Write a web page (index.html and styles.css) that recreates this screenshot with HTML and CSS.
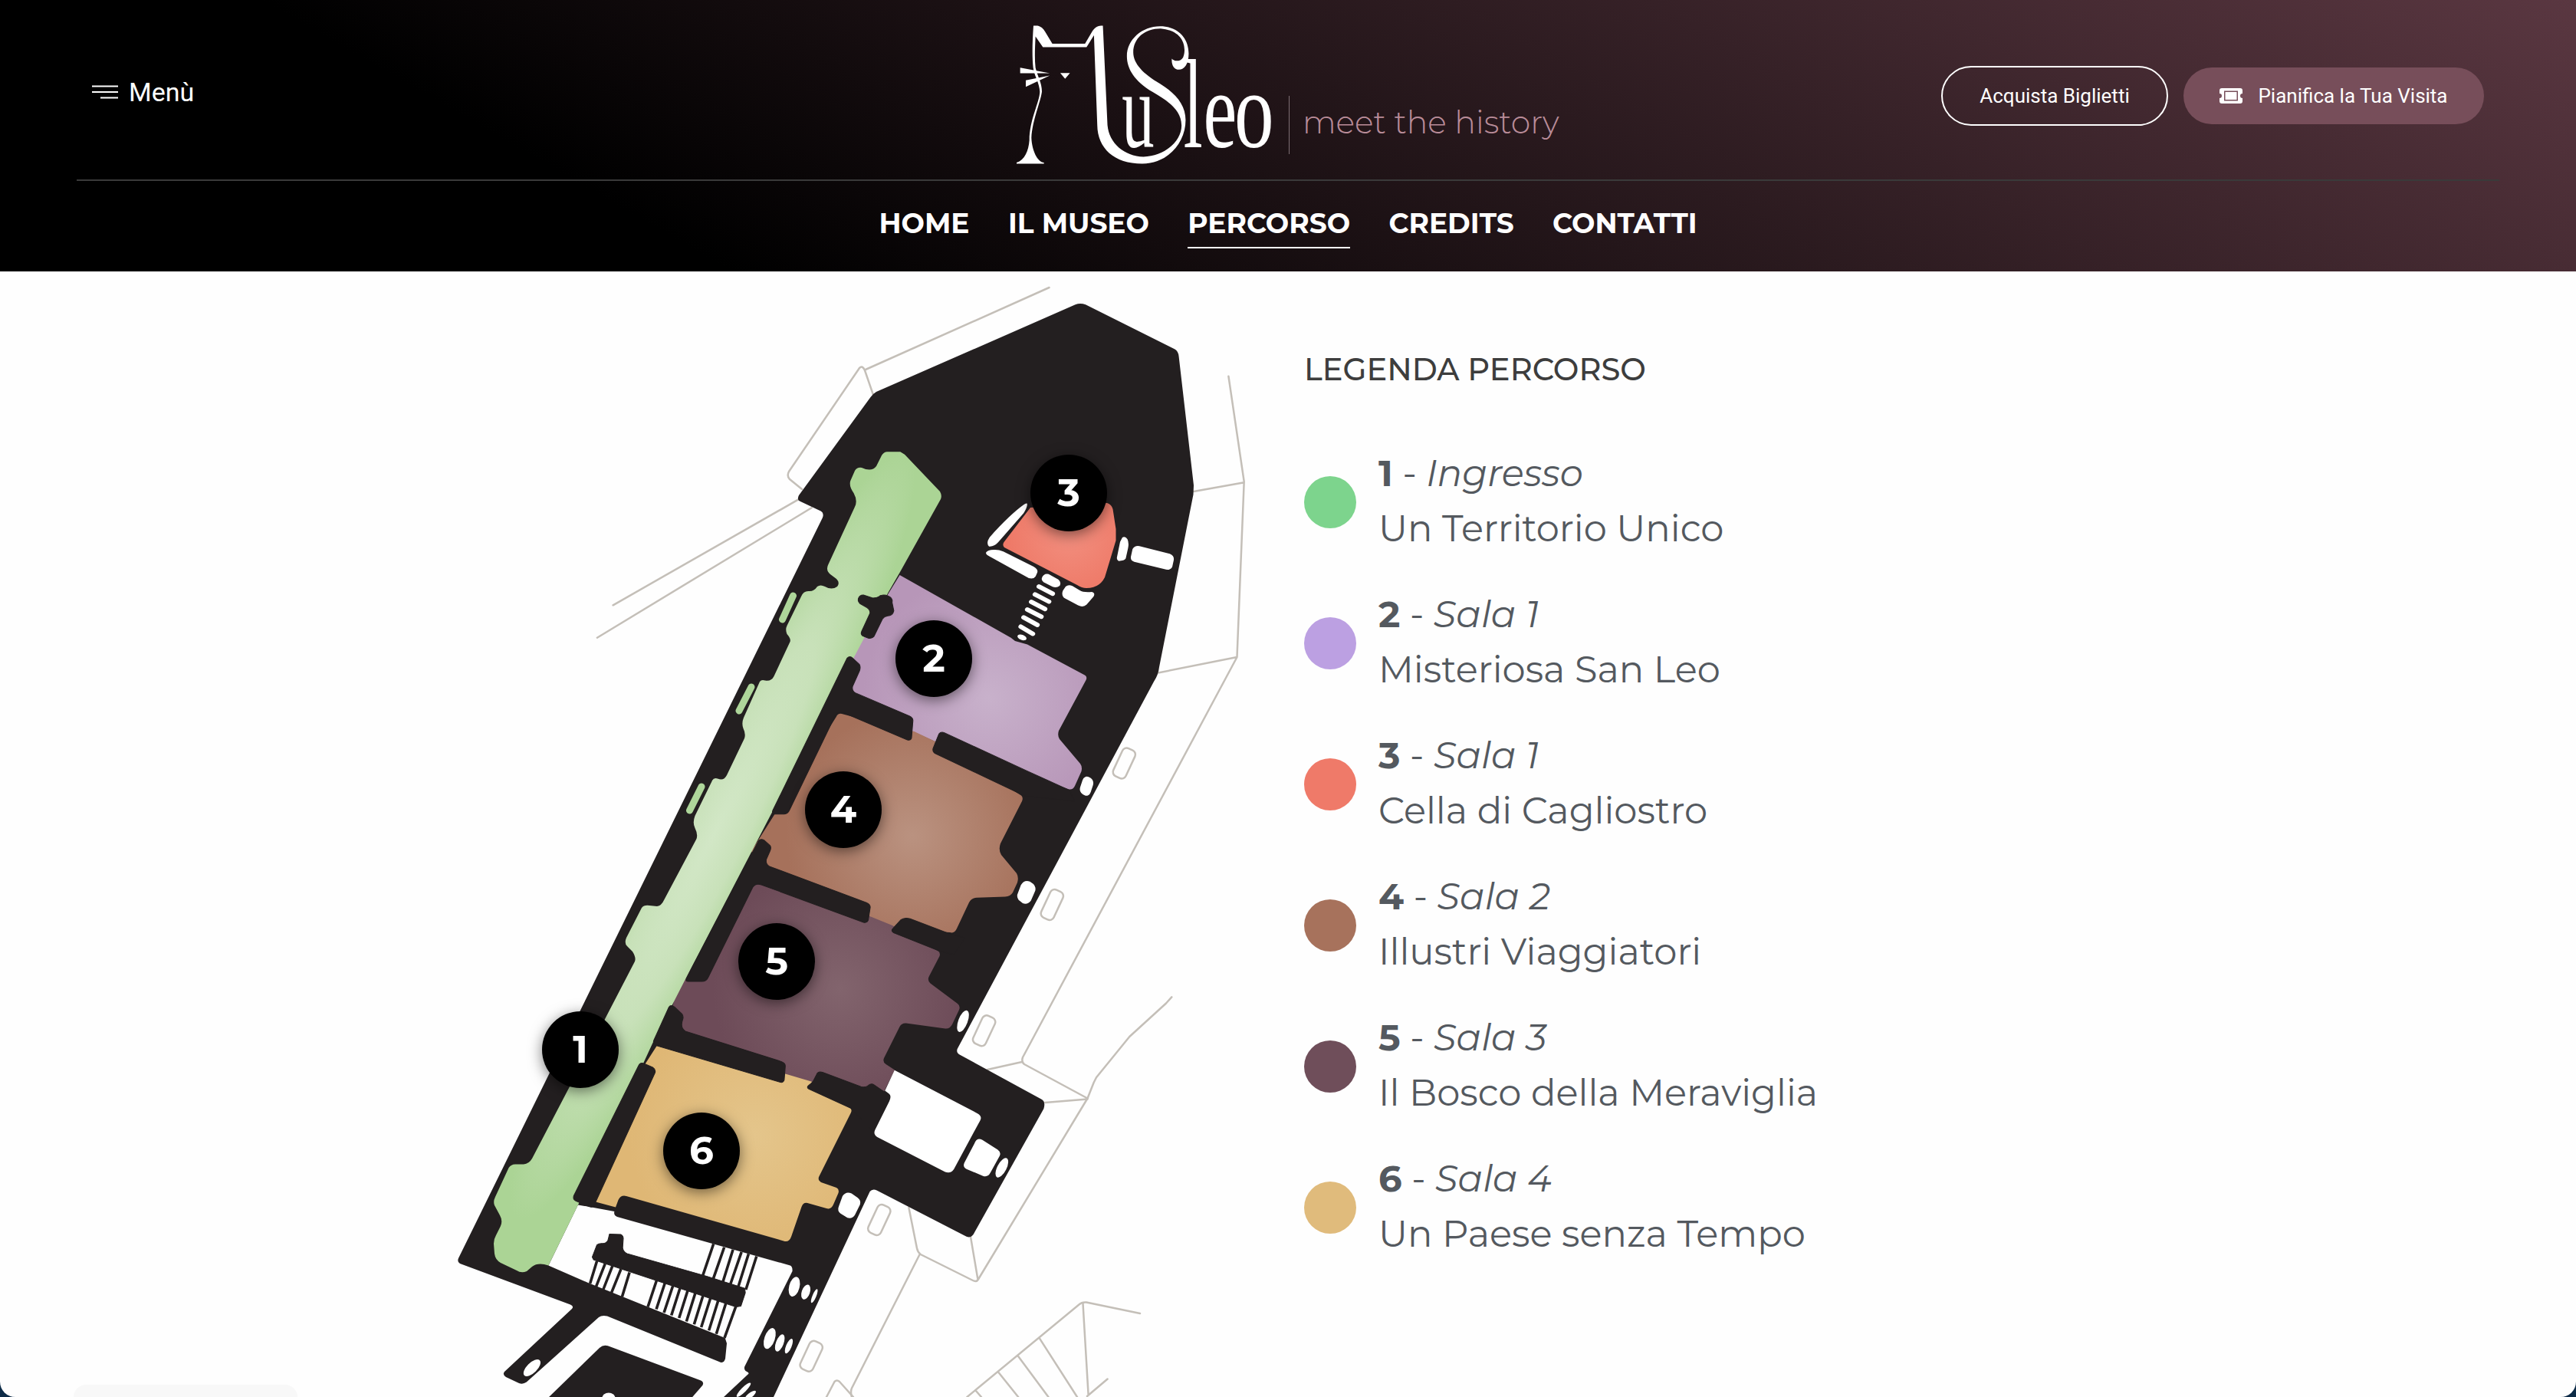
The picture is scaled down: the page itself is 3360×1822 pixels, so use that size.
FILE: index.html
```html
<!DOCTYPE html>
<html lang="it">
<head>
<meta charset="utf-8">
<title>MuSleo – Percorso</title>
<link rel="stylesheet" href="styles.css">
</head>
<body>
<div class="page">
  <header class="header">
    <div class="topbar">
      <a class="menu">
        <svg class="menu-icon" viewBox="0 0 34 20"><path d="M0 2.5H34M0 10H34M11 17.500H34"/></svg>
        <span class="menu-label">Menù</span>
      </a>
      <div class="brand">
        <svg class="logo" viewBox="48 40 1000 542" role="img" aria-label="MuSleo">
          <path d="M114 41H130C145 45 152 52 160 65L188 111H316L345 62C356 46 366 41 386 41L404 430C410 500 470 552 545 554C630 552 696 490 694 430C692 370 640 335 580 300C510 258 480 210 480 160C480 95 540 43 610 43C680 43 722 90 722 150C722 190 705 213 684 213C665 213 654 195 656 170C665 182 690 182 700 165C715 130 705 60 612 52C550 52 505 90 505 145C505 190 545 230 610 268C670 305 710 350 710 410C710 500 640 581 540 581C430 581 365 520 364 430L351 78L322 125H151L122 83C120 130 118 170 122 205C130 240 148 265 147 300C142 340 110 410 106 480C108 530 130 575 155 577V581H48V577C80 568 95 530 98 490C98 410 138 340 139 300C138 265 118 240 113 205C108 160 110 100 114 41Z"/>
          <path d="M62 205L178 227L62 227ZM84 255L178 236L84 280ZM219 226H257L238 249Z"/>
          <text class="logo-letter" font-size="424" transform="translate(460 518) scale(.6 1)">u</text>
          <text class="logo-letter" font-size="498" transform="translate(702 518) scale(.54 1)">l</text>
          <text class="logo-letter" font-size="424" transform="translate(779 518) scale(.7 1)">e</text>
          <text class="logo-letter" font-size="424" transform="translate(901 518) scale(.73 1)">o</text>
        </svg>
        <span class="tagline">meet the history</span>
      </div>
      <div class="actions">
        <a class="btn btn-outline">Acquista Biglietti</a>
        <a class="btn btn-solid">
          <svg class="ticket" viewBox="0 0 30 20"><path fill-rule="evenodd" d="M3 0H27Q30 0 30 3V7A3 3 0 0 0 30 13V17Q30 20 27 20H3Q0 20 0 17V13A3 3 0 0 0 0 7V3Q0 0 3 0ZM6 3.500V16.500H24V3.500Z"/><rect x="7.500" y="5" width="15" height="10"/></svg>
          <span class="btn-text">Pianifica la Tua Visita</span>
        </a>
      </div>
    </div>
    <nav class="nav">
      <a>HOME</a><a>IL MUSEO</a><a class="active">PERCORSO</a><a>CREDITS</a><a>CONTATTI</a>
    </nav>
  </header>

  <main class="main">
    <div class="map">
      <svg class="plan" viewBox="560 354 1100 1468">
        <defs>
          <radialGradient id="green" gradientUnits="userSpaceOnUse" cx="0" cy="0" r="1" gradientTransform="translate(930 1090) rotate(-63) scale(560 80)"><stop offset="0" stop-color="#d2e7c6"/><stop offset=".5" stop-color="#c8e1b9"/><stop offset="1" stop-color="#abd495"/></radialGradient>
          <radialGradient id="violet" gradientUnits="userSpaceOnUse" cx="1290" cy="910" r="165"><stop offset="0" stop-color="#c8b1cb"/><stop offset="1" stop-color="#b796b8"/></radialGradient>
          <radialGradient id="brown" gradientUnits="userSpaceOnUse" cx="1190" cy="1090" r="165"><stop offset="0" stop-color="#ba9280"/><stop offset="1" stop-color="#a6715b"/></radialGradient>
          <radialGradient id="plum" gradientUnits="userSpaceOnUse" cx="1095" cy="1290" r="165"><stop offset="0" stop-color="#82646d"/><stop offset="1" stop-color="#6d4b58"/></radialGradient>
          <radialGradient id="ochre" gradientUnits="userSpaceOnUse" cx="985" cy="1480" r="165"><stop offset="0" stop-color="#e4c58b"/><stop offset="1" stop-color="#dfb775"/></radialGradient>
          <radialGradient id="coral" gradientUnits="userSpaceOnUse" cx="1395" cy="695" r="90"><stop offset="0" stop-color="#f28f7f"/><stop offset="1" stop-color="#ee7765"/></radialGradient>
        </defs>

        <!-- terrain outlines -->
        <g class="line">
          <path d="M1046 638L1030 625Q1026 621 1029 615L1121 480Q1125 476 1128 483L1139 515M1129 482L1368.500 375"/>
          <path d="M799.600 789.300L1041 651.700M778.900 831.700L1058.600 662.300"/>
          <path d="M1602.400 490.700L1622.700 628L1613.500 856.700M1557 641L1622.700 629.300M1510.700 877.500L1613.500 857L1334 1379Q1332 1385 1336 1388L1418.500 1432.500M1288 1395L1333 1385M1363.300 1438L1418.500 1433.500"/>
          <path d="M1528.300 1300.400L1521 1308.500L1473.300 1352L1430 1405.300L1426.600 1412L1418.500 1432.500L1275.700 1669Q1273.500 1672.500 1269 1670L1200.700 1636Q1197 1633 1196 1628L1185.400 1575M1266 1613L1275.500 1669M1199.600 1636L1111 1810.500Q1109 1815 1111 1822"/>
          <path d="M1078 1822L1088.500 1802Q1091.500 1799 1095 1802L1113 1822M1261.400 1822L1408 1701Q1411 1698 1417 1698.500L1487 1713M1412.500 1700L1419.600 1819M1356 1745.600L1405 1822M1328.200 1769L1367.500 1822M1302.500 1790L1328.200 1822M1273 1814L1280 1822M1418 1821L1444.600 1798.500"/>
          <rect x="-9" y="-20" width="18" height="40" rx="6" transform="translate(1466.300 995.500) rotate(25)"/>
          <rect x="-9" y="-20" width="18" height="40" rx="6" transform="translate(1372.300 1180) rotate(25)"/>
          <rect x="-9" y="-20" width="18" height="40" rx="6" transform="translate(1283.600 1344.300) rotate(25)"/>
          <rect x="-9" y="-20" width="18" height="40" rx="6" transform="translate(1146.800 1591) rotate(25)"/>
          <rect x="-9" y="-20" width="18" height="40" rx="6" transform="translate(1058.200 1768.800) rotate(25)"/>
        </g>

        <!-- building -->
        <path class="wall" d="M1402.600 397.300Q1409 394.500 1416 397.300L1532 455.300Q1537 458 1537.600 465L1557 633L1556.500 645L1512 870Q1511 880 1505 889L1248.700 1368Q1247 1373 1251.700 1375.500L1359 1434Q1364 1437 1361.400 1446L1269.600 1610Q1265 1616 1258.600 1611.800L1143.600 1552.400Q1138 1550 1134.600 1554L1009 1822H944L975 1793Q979 1791 972.500 1788Q970 1785 971.400 1782L1033.500 1658Q1034 1652 1030.700 1650.500L805 1587Q800 1585 801.400 1580L753.900 1571.400L715.400 1650.500L767 1673L945.700 1745L948 1752L946 1772Q944 1779 938 1776L792 1716.500Q785 1715 781 1718L686.800 1802.600Q682 1806 677 1804L660 1796Q655 1793 658 1789L746 1707Q749 1704 744 1701.500L600 1648Q596 1646 598 1641L1073 675Q1075 669 1071 666.700L1044 654Q1039 652 1042 646L1135.500 518Q1138 514 1143 511Z"/>
        <g transform="translate(560 1280) scale(.35714 .34566)">
          <path class="wall" d="M430 1575L622 1382Q635 1370 652 1375L990 1505Q1004 1511 998 1524L955 1575Z"/>
          <path class="wall round" d="M595 1040L612 994Q620 987 635 989Q652 986 654 970L658 953L700 955Q710 960 708 975L706 1005Q708 1020 722 1027L1012 1112L1152 1158L1154 1175L1138 1225L1120 1228L600 1050Z"/>
          <path class="step" d="M1038 990L998 1112M1077 1003L1036 1125M1109 1012L1072 1134M1140 1021L1099 1144M1166 1028L1128 1153M1195 1037L1156 1163M612 1055L587 1140M642 1065L609 1152M669 1073L635 1163M700 1085L665 1175M731 1098L704 1190M830 1128L798 1228M861 1136L829 1237M890 1147L857 1250M916 1156L884 1260M944 1165L912 1270M972 1174L939 1283M1000 1184L967 1294M1027 1194L993 1305M1055 1204L1021 1317M1083 1214L1048 1330M1120 1225L1078 1345"/>
          <g class="hole">
            <ellipse cx="1333" cy="1152" rx="19" ry="38" transform="rotate(14 1333 1152)"/>
            <ellipse cx="1375" cy="1172" rx="15" ry="29" transform="rotate(18 1375 1172)"/>
            <ellipse cx="1406" cy="1187" rx="7" ry="28" transform="rotate(22 1406 1187)"/>
            <ellipse cx="1243" cy="1347" rx="19" ry="41" transform="rotate(18 1243 1347)"/>
            <ellipse cx="1280" cy="1364" rx="14" ry="34" transform="rotate(20 1280 1364)"/>
            <ellipse cx="1313" cy="1376" rx="10" ry="30" transform="rotate(22 1313 1376)"/>
            <ellipse cx="375" cy="1458" rx="19" ry="40" transform="rotate(44 375 1458)"/>
            <ellipse cx="655" cy="1572" rx="24" ry="20"/>
            <ellipse cx="1148" cy="1541" rx="9" ry="36" transform="rotate(44 1148 1541)"/>
            <ellipse cx="1172" cy="1562" rx="9" ry="26" transform="rotate(50 1172 1562)"/>
          </g>
        </g>

        <!-- rooms -->
        <path fill="url(#violet)" d="M1173.600 750L1318.600 831.700L1324 836L1340 840.500L1413 879.500Q1419 882 1416.500 887L1381 953Q1379 959 1382 964L1409 996Q1412 1000 1410.500 1006L1402 1025Q1399 1031 1393 1029L1219.300 967L1192.500 955L1090 910L1112 850Z"/>
        <path fill="url(#brown)" d="M1090.700 935Q1093 930 1098 931L1170 950L1192.500 954L1219.300 966.700L1332 1037.500Q1335 1040 1333 1045L1305 1100Q1302 1108 1306 1115L1326 1139Q1329 1144 1327 1151L1321 1164Q1318 1169 1311 1169.500L1274 1170.700Q1267 1171 1264 1177L1248 1211Q1245 1218 1239 1216L1164 1212L1137 1200L1000 1150L980 1110Z"/>
        <path fill="url(#plum)" d="M880 1300L975 1140Q982 1135 990 1140L1137 1196L1164 1207L1223 1240Q1227 1242 1225.500 1247L1212 1273Q1209 1278 1213.500 1282.500L1249 1309Q1253 1312 1251 1317L1242 1336Q1239 1342 1233 1341.500L1182 1334.500Q1176 1334 1173.500 1339L1153 1380Q1151 1385 1155.500 1388L1167 1395.500L1153 1424L1058 1412L1026 1402L870 1350Z"/>
        <path fill="url(#ochre)" d="M858 1362L1026 1401L1058.200 1410.500L1107 1444Q1112 1446 1110 1451L1068.500 1534Q1066 1539 1071 1542L1091 1549Q1095 1551 1093.500 1556L1087 1571Q1084 1578 1078 1576L1055 1569.500Q1048 1567 1045.500 1574L1032 1613Q1029 1621 1022 1618.500L817 1560Q810 1558 806.500 1565L803 1574.500L760 1563L840 1390Z"/>
        <path fill="url(#green)" d="M1157.700 589.300L1174.300 589.300L1180 592.700L1226 641Q1229 646 1227 651L1174 746L1158.400 773L1005 1063.300L892.500 1280L851 1361L754 1571.400L715.400 1650.500Q702 1646 694 1652L687 1658Q680 1661 674 1657L653 1647Q646 1643 645 1635L644 1622Q644 1616 647 1611L653 1599Q656 1592 652 1585L645 1572Q643 1567 646 1561L663.600 1523Q667 1518 673 1518.500H683Q690 1518 694 1511L787 1333L828 1254Q830 1249 825 1241L818 1234Q814 1230 817 1223L837 1184Q840 1180 847 1181L857 1182Q863 1181 866 1174L908 1095Q911 1089 906.500 1080Q903 1073 906.500 1064L929 1018Q931 1014 936 1015.500Q944 1019 948 1011L971 963Q973 957 969.500 950Q967 943 970 936L991 889Q993 886 998 887.500Q1006 889 1009.500 882L1030.500 837Q1032 833 1026.500 827Q1024 821 1026.500 816L1045 778Q1048 770 1056 771Q1062 771 1066 765Q1070 762 1076 765Q1085 770 1092 765Q1096 760 1091 755L1083 749Q1077 744 1080 737L1115 661Q1119 653 1113.500 643Q1107 634 1109.300 627L1115 614Q1118 609 1124 610Q1137 616 1143 608L1150 594Q1153 589 1157.700 589.300Z"/>
        <path class="slot" d="M1034.500 777L1020.500 808M980 896L964 927M915 1026L899.500 1057"/>

        <!-- inner walls -->
        <g class="wall round">
          <g transform="translate(1080 350) scale(.3699 .3333)"><path d="M107 1292Q112 1277 125 1278L158 1290Q175 1290 185 1280Q200 1275 212 1282Q230 1290 226 1308L232 1340Q228 1360 210 1360Q198 1362 192 1372L162 1440Q155 1450 142 1447L122 1438Q114 1432 119 1420L148 1350Q150 1338 138 1328L113 1312Q105 1304 107 1292Z"/></g>
          <g transform="translate(780 800) scale(.35714 .3333)">
            <path d="M910 175Q920 164 930 175L955 200Q960 210 955 225L930 285Q926 303 940 311L1138 402Q1152 410 1150 422L1145 488Q1142 498 1130 495L895 388Q877 382 868 396L700 768Q693 785 680 785H645Q634 785 638 772Z"/>
            <path d="M1245 472Q1252 462 1265 467L1568 617L1722 692L1740 735L1560 715L1235 550Q1220 542 1224 528Z"/>
            <path d="M586 890Q594 880 606 887L628 908Q634 916 628 930L615 962Q611 980 626 990L980 1132Q996 1140 994 1152L987 1200Q983 1212 970 1209L597 1062Q575 1054 565 1072L402 1425Q395 1440 380 1440H330Q318 1440 323 1428Z"/>
            <path d="M1105 1200Q1118 1188 1140 1195L1285 1254L1340 1270L1300 1335L1245 1320L1080 1250Q1068 1242 1078 1232Z"/>
          </g>
          <g transform="translate(560 1280) scale(.35714 .34566)">
            <path d="M875 97Q882 86 895 96L922 122Q930 132 925 145Q915 175 935 188L1285 302Q1301 308 1300 320L1296 372Q1292 384 1280 380L830 242Q815 236 820 222Z"/>
            <path d="M763 320Q770 303 785 310L817 325Q828 332 824 345L604 840Q598 855 585 850L535 828Q523 822 528 808Z"/>
          </g>
          <g transform="translate(1040 1280) scale(.35714 .34566)"><path d="M70 352Q75 338 92 343L232 397Q250 402 260 392Q270 383 280 390L328 424Q340 432 334 448L280 570L195 478L42 406Q32 400 42 392Q58 380 62 368Z"/></g>
        </g>

        <!-- openings in the walls -->
        <g class="hole">
          <g transform="translate(1040 1280) scale(.35714 .34566)">
            <path d="M355 335L658 498Q676 508 668 524L572 708Q560 727 540 719L292 587Q276 577 284 560L336 452Q345 432 335 424L320 412Z"/>
            <path d="M650 605Q658 588 676 598L732 635Q745 645 739 658L705 722Q696 740 678 734L618 708Q603 700 610 684Z"/>
            <path d="M165 810Q178 790 198 800L220 816Q234 827 229 842L210 882Q200 897 183 892L158 876Q145 866 151 850Z"/>
            <ellipse cx="747" cy="703" rx="17" ry="40" transform="rotate(26 747 703)"/>
            <ellipse cx="605" cy="150" rx="17" ry="43" transform="rotate(20 605 150)"/>
          </g>
          <g transform="translate(1200 800) scale(.3333 .40816)">
            <rect x="630" y="522" width="44" height="60" rx="18" transform="rotate(22 652 552)"/>
            <path d="M395 868Q408 850 430 857L444 865Q457 877 449 890L434 918Q420 932 402 926L386 916Q376 905 384 892Z"/>
          </g>
          <g transform="translate(1080 350) scale(.3699 .3333)">
            <path d="M702 920Q705 930 690 958L600 1072Q585 1090 568 1088Q556 1075 570 1052Q640 965 690 925Q698 918 702 920ZM557 1112Q562 1102 585 1101Q602 1100 618 1108L725 1167Q742 1178 738 1190L732 1205Q725 1217 708 1212L570 1127Q556 1120 557 1112ZM754 1212Q760 1192 778 1196L812 1217Q824 1228 817 1242Q806 1252 792 1246L760 1228Q752 1222 754 1212ZM828 1262L838 1245Q848 1236 862 1243L888 1260Q900 1269 930 1266Q944 1270 936 1285L912 1316Q900 1328 882 1319L835 1291Q822 1282 828 1262ZM1038 1053Q1048 1046 1056 1060Q1062 1075 1058 1095L1050 1135Q1045 1145 1025 1145Q1017 1142 1019 1130L1030 1070ZM1074 1098Q1082 1084 1098 1087L1205 1117Q1222 1124 1219 1142L1214 1168Q1208 1182 1192 1178L1080 1148Q1066 1144 1068 1128Z"/>
            <path class="rung" d="M744 1245L792 1273M730 1276L779 1304M717 1305L765 1333M703 1335L752 1363M690 1366L738 1395M680 1402L722 1430"/>
            <ellipse cx="684" cy="1444" rx="17" ry="10" transform="rotate(25 684 1444)"/>
          </g>
        </g>
        <path fill="url(#coral)" d="M1344 662L1444 656Q1450 658 1451.500 664L1455.500 690V705L1441 753Q1434 767 1417 767Q1411 767 1405 763L1310 714Q1307 711 1309.500 707Z"/>
      </svg>
      <span class="pin pin-1">1</span>
      <span class="pin pin-2">2</span>
      <span class="pin pin-3">3</span>
      <span class="pin pin-4">4</span>
      <span class="pin pin-5">5</span>
      <span class="pin pin-6">6</span>
    </div>

    <section class="legend">
      <h1 class="legend-title">LEGENDA PERCORSO</h1>
      <ul class="legend-list">
        <li class="room"><span class="dot dot-green"></span><p class="room-text"><b>1</b> - <i>Ingresso</i><br>Un Territorio Unico</p></li>
        <li class="room"><span class="dot dot-violet"></span><p class="room-text"><b>2</b> - <i>Sala 1</i><br>Misteriosa San Leo</p></li>
        <li class="room"><span class="dot dot-coral"></span><p class="room-text"><b>3</b> - <i>Sala 1</i><br>Cella di Cagliostro</p></li>
        <li class="room"><span class="dot dot-brown"></span><p class="room-text"><b>4</b> - <i>Sala 2</i><br>Illustri Viaggiatori</p></li>
        <li class="room"><span class="dot dot-plum"></span><p class="room-text"><b>5</b> - <i>Sala 3</i><br>Il Bosco della Meraviglia</p></li>
        <li class="room"><span class="dot dot-ochre"></span><p class="room-text"><b>6</b> - <i>Sala 4</i><br>Un Paese senza Tempo</p></li>
      </ul>
    </section>
  </main>
  <div class="bottom-tab"></div>
</div>
</body>
</html>
```
FILE: styles.css
```css
* { box-sizing: border-box; }
body { margin: 0; background: #0d2b47; font-family: Montserrat, Inter, sans-serif; }
.page { position: relative; width: 3360px; height: 1822px; overflow: hidden; background: #fefefe; border-radius: 0 0 20px 20px; }

.header { height: 354px; padding: 0 100px; color: #fff; background: linear-gradient(30deg, #000 24%, #5a3741 100%); }
.topbar { display: grid; grid-template-columns: 1fr auto 1fr; height: 236px; padding: 0 20px; border-bottom: 2px solid #3a3a3a; }
.menu { display: flex; align-items: center; gap: 14px; height: 240px; font: 400 34px/40px Roboto, sans-serif; }
.menu-icon { width: 34px; height: 20px; stroke: #fff; stroke-width: 2; fill: none; }
.brand { display: flex; align-items: flex-start; padding-top: 33px; }
.logo { width: 333px; height: 181px; overflow: visible; fill: #fff; }
.logo-letter { font-family: "Liberation Serif", serif; }
.tagline { width: 353px; height: 76px; margin: 92px 0 0 22px; padding-left: 17px; border-left: 1px solid #7e6f74; color: #b98c99; font: 300 41px/69px Montserrat, Lato, sans-serif; white-space: nowrap; }
.actions { display: flex; justify-content: flex-end; align-items: center; gap: 20px; height: 250px; }
.btn { display: flex; align-items: center; justify-content: center; font: 400 26px/30px Roboto, sans-serif; white-space: nowrap; border-radius: 40px; }
.btn-outline { width: 296px; height: 78px; border: 2px solid #fff; }
.btn-solid { width: 392px; height: 74px; gap: 20px; background: #774e5a; }
.ticket { width: 30px; height: 20px; fill: #fff; }

.nav { display: flex; justify-content: center; gap: 50.4px; padding-top: 29px; font-size: 36px; font-weight: 700; line-height: 53px; white-space: nowrap; }
.nav a { height: 59px; border-bottom: 2px solid transparent; }
.nav .active { border-color: #fff; }

.main { display: flex; gap: 41px; height: 1468px; padding-left: 560px; }
.map { position: relative; width: 1100px; height: 1468px; }
.plan { display: block; width: 1100px; height: 1468px; }
.line { fill: none; stroke: #c4bfb8; stroke-width: 2.5; stroke-linecap: round; stroke-linejoin: round; }
.wall { fill: #231f20; }
.round { stroke: #231f20; stroke-width: 3; stroke-linejoin: round; }
.step { fill: none; stroke: #231f20; stroke-width: 10; }
.hole { fill: #fff; }
.rung { fill: none; stroke: #fff; stroke-width: 17; stroke-linecap: round; }
.slot { fill: none; stroke: #aed69a; stroke-width: 9; stroke-linecap: round; }

.pin { position: absolute; display: flex; align-items: center; justify-content: center; width: 100px; height: 100px; border-radius: 50%; background: #000; color: #fff; font-size: 50px; font-weight: 700; line-height: 98px; box-shadow: 0 4px 18px rgba(0,0,0,.5); }
.pin-1 { left: 147px; top: 965px; }
.pin-2 { left: 608px; top: 455px; }
.pin-3 { left: 784px; top: 239px; }
.pin-4 { left: 490px; top: 652px; }
.pin-5 { left: 403px; top: 850px; }
.pin-6 { left: 305px; top: 1097px; }

.legend { padding-top: 103px; color: #54595f; white-space: nowrap; }
.legend-title { margin: 0 0 74px; color: #3d3d3d; font-size: 40px; font-weight: 500; line-height: 50px; }
.legend-list { display: flex; flex-direction: column; gap: 40px; margin: 0; padding: 0; list-style: none; }
.room { display: flex; align-items: center; gap: 29px; height: 144px; }
.dot { width: 68px; height: 68px; margin-top: 4px; border-radius: 50%; }
.dot-green { background: #7dd48d; }
.dot-violet { background: #bca0e2; }
.dot-coral { background: #ef7a69; }
.dot-brown { background: #a7725c; }
.dot-plum { background: #6f4e5a; }
.dot-ochre { background: #e0bb7c; }
.room-text { margin: 0; font-size: 48px; line-height: 72px; }
.room-text b { font-weight: 700; }

.bottom-tab { position: absolute; left: 96px; top: 1806px; width: 292px; height: 60px; border-radius: 16px; background: #f8f8f8; }
```
